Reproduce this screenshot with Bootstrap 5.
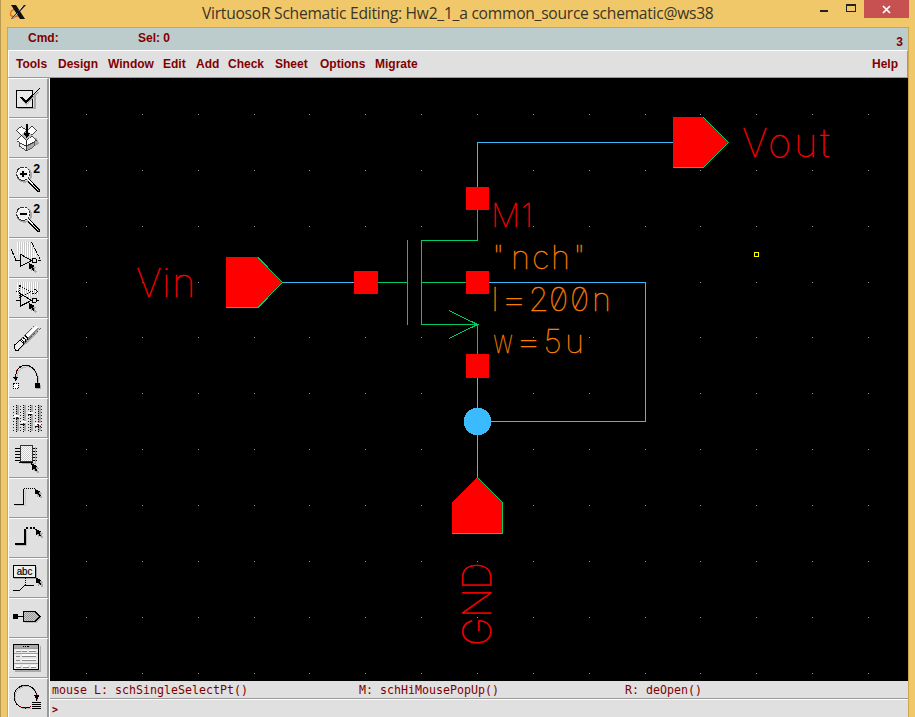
<!DOCTYPE html>
<html lang="en">
<head>
<meta charset="utf-8">
<meta name="viewport" content="width=device-width, initial-scale=1">
<title>VirtuosoR Schematic Editing</title>
<link href="https://cdn.jsdelivr.net/npm/bootstrap@5.3.0/dist/css/bootstrap.min.css" rel="stylesheet">
<style>
  html, body { height: 100%; overflow: hidden; }
  body { background: #f0c869; }
  svg { display: block; }
  .win { width: 915px; height: 717px; border-left: 1px solid #b89a52; padding: 0 6px; }
  .titlebar { height: 27px; }
  .xlogo { margin: 4px 0 0 2px; }
  .wtitle { font: 15.6px/26px "Open Sans", "Noto Sans", sans-serif; color: #3a3428; white-space: nowrap; left: 195px; top: 0; letter-spacing: -.25px; }
  .winbtns { margin-right: 0; }
  .closebtn { width: 45px; height: 18px; background: #c75050; }
  .client { border: 1px solid #caa750; border-bottom: 0; background: #e0e0e0; width: 902px; height: 690px; }
  .ui { font: bold 12px/14px "Liberation Sans", Arial, sans-serif; color: #800000; }
  .cmdbar { height: 22px; background: #bccccc; }
  .cmdgrid { display: grid; grid-template-columns: 110px 1fr auto; padding: 3px 5px 0 20px; }
  .menus { height: 28px; border-top: 1px solid #fff; border-bottom: 1px solid #999; border-right: 1px solid #999; border-left: 1px solid #fff; padding: 6px 9px 0 7px; }
  .menugrid { display: grid; grid-template-columns: 42px 50px 55px 33px 32px 47px 45px 55px 1fr auto; }
  .tools { width: 42px; border-left: 1px solid #fff; border-right: 1px solid #fff; }
  .toolbtn { width: 40px; height: 40px; border: 0 solid; border-width: 1px 2px 1px 0; border-color: #fff #999 #999 #fff; background: #e0e0e0; padding: 0; flex: none; }
  .toolbtn svg { width: 38px; height: 38px; shape-rendering: crispEdges; }
  .stat { height: 18px; border-bottom: 1px solid #999; display: grid; grid-template-columns: 307px 266px 1fr; padding: 2px 0 0 2px; }
  .term { font: 11.63px/15px "DejaVu Sans Mono", "Liberation Mono", monospace; color: #800000; white-space: pre; }
  .prompt { border-top: 1px solid #fff; padding: 2px 0 0 2px; font-weight: bold; font-size: 10px; }
  .thin { font-family: Inter, "Lato", sans-serif; font-weight: 100; stroke-width: .35px; }
  .key { font-family: "Liberation Sans", Arial, sans-serif; }
</style>
<script src="https://cdn.jsdelivr.net/npm/bootstrap@5.3.0/dist/js/bootstrap.bundle.min.js"></script>
</head>
<body>
<div class="win">
  <header class="titlebar d-flex position-relative">
    <svg class="xlogo" width="19" height="18" viewBox="0 0 19 18">
      <path d="M8 5C3 5 1 8 1.500 10.500S7 13.500 11 11" fill="none" stroke="#e8702a" stroke-width="1.500"/>
      <path d="M2 1h5l9 14h-5z" fill="#111"/><path d="M15 1h2L4 15H2z" fill="#111"/>
      <path d="M8.500 9.500L3.500 15M13.500 2L10 6.500" stroke="#ddd" stroke-width="1"/>
    </svg>
    <div class="wtitle position-absolute">VirtuosoR Schematic Editing: Hw2_1_a common_source schematic@ws38</div>
    <div class="winbtns d-flex ms-auto">
      <svg width="46" height="18" viewBox="818 0 46 18" shape-rendering="crispEdges"><path d="M820 10h8v2h-8z" fill="#222"/><path d="M846 4h10v8h-10zM847 6v5h8V6z" fill="#222" fill-rule="evenodd"/></svg>
      <div class="closebtn d-flex align-items-center justify-content-center"><svg width="9" height="9" viewBox="0 0 9 9"><path d="M1 1l7 7M8 1L1 8" stroke="#fff" stroke-width="1.700"/></svg></div>
    </div>
  </header>
  <main class="client d-flex flex-column">
    <div class="cmdbar"><div class="cmdgrid ui"><span>Cmd:</span><span>Sel: 0</span><span class="pt-1">3</span></div></div>
    <nav class="menus"><div class="menugrid ui"><span>Tools</span><span>Design</span><span>Window</span><span>Edit</span><span>Add</span><span>Check</span><span>Sheet</span><span>Options</span><span>Migrate</span><span>Help</span></div></nav>
    <div class="d-flex flex-grow-1 overflow-hidden">
      <aside class="tools d-flex flex-column flex-shrink-0">
        <svg width="0" height="0" class="position-absolute"><defs>
          <g id="cur"><path d="M4 6l4 20 5-5 6 9 5-4-6-8 6-4z" fill="#aaa"/><path d="M0 0l3 20 5-5 6 9 4-3-6-8 6-4z" fill="#000"/></g>
          <pattern id="chk" width="6" height="6" patternUnits="userSpaceOnUse"><path d="M0 0h6v6H0z" fill="#fff"/><path d="M0 0h3v3H0zM3 3h3v3H3z" fill="#ccc"/></pattern>
          <pattern id="chkd" width="6" height="6" patternUnits="userSpaceOnUse"><path d="M0 0h6v6H0z" fill="#ccc"/><path d="M0 0h3v3H0zM3 3h3v3H3z" fill="#999"/></pattern>
          <g id="lens"><path d="M90 76l28 30" stroke="#aaa" stroke-width="8"/><circle cx="73" cy="57" r="21" fill="none" stroke="#aaa" stroke-width="5"/><circle cx="70" cy="53" r="20" fill="#eee" stroke="#333" stroke-width="3" stroke-dasharray="7 2"/><circle cx="70" cy="53" r="17" fill="none" stroke="#fff" stroke-width="3"/><path d="M53 43q5-9 13-10M51 58q2 6 6 9" fill="none" stroke="#a00000" stroke-width="2.500"/><path d="M84 70l30 31" stroke="#fff" stroke-width="5"/><path d="M88 70l30 32v4h-5L84 76" fill="none" stroke="#000" stroke-width="3"/></g>
        </defs></svg>
        <button class="toolbtn"><svg viewBox="27 9 114 114"><path d="M55 96h50V54" fill="none" stroke="#aaa" stroke-width="6"/><rect x="49.500" y="42.500" width="48" height="51" fill="#e8e8e8" stroke="#000" stroke-width="3"/><path d="M66 72l14 13L116 48" fill="none" stroke="#aaa" stroke-width="4"/><path d="M60 64h7l11 9 40-36h3L78 82z" fill="#000"/></svg></button>
        <button class="toolbtn"><svg viewBox="27 9 114 114"><path d="M84 104l34-22-10-18-24 20z" fill="#aaa"/><path d="M57 78l23 13v14L57 90z" fill="#eee" stroke="#000" stroke-width="2"/><path d="M103 78L80 91v14l23-14z" fill="#aaa" stroke="#333" stroke-width="2"/><path d="M50 43l14-12 16 13-16 14zM80 44l16-13 14 12-14 15zM50 73l14-14 16 15v16L58 80zM80 74l16-15 14 14-30 17z" fill="#fff" stroke="#222" stroke-width="2.500"/><path d="M64 58l16-14 16 14-16 14z" fill="#bbb"/><path d="M78.500 24h4v26h9L80.500 66 69 50h9.500z" fill="#000"/></svg></button>
        <button class="toolbtn"><svg viewBox="27 9 114 114"><use href="#lens"/><path d="M60 54h20M70 44v20" stroke="#000" stroke-width="6"/><text class="key" x="100" y="52" font-size="37" font-weight="bold">2</text></svg></button>
        <button class="toolbtn"><svg viewBox="27 9 114 114"><use href="#lens"/><path d="M60 54h20" stroke="#000" stroke-width="6"/><text class="key" x="100" y="52" font-size="37" font-weight="bold">2</text></svg></button>
        <button class="toolbtn"><svg viewBox="27 9 114 114"><path d="M53 18v38M59 18v38M65 18v38M71 18v42M77 18v44M83 18v46M89 18v48M95 24v42M101 38v26M107 50v12" stroke="#fff" stroke-width="3"/><path d="M56 18v38M62 18v38M68 18v42M74 18v44M80 18v46M86 18v48M92 18v48M98 30v32" stroke="#bbb" stroke-width="2"/><path d="M34 40l14 34M48 74h12M95 18l25 50v6h-8" fill="none" stroke="#000" stroke-width="3" stroke-dasharray="8 2"/><path d="M60 54v38l35-18z" fill="#e0e0e0" stroke="#000" stroke-width="3"/><circle cx="103" cy="74" r="7" fill="#e0e0e0" stroke="#000" stroke-width="3"/><use href="#cur" x="86" y="81"/></svg></button>
        <button class="toolbtn"><svg viewBox="27 9 114 114"><path d="M53 18v38M59 18v38M65 18v38M71 18v42M77 18v44M83 18v46M89 18v48M95 18v42M101 18v40M107 18v40M113 18v40" stroke="#fff" stroke-width="3"/><path d="M56 18v38M62 18v38M68 18v42M74 18v44M80 18v46M86 18v48M92 18v48M98 18v40M104 18v40M110 18v40M116 18v40" stroke="#bbb" stroke-width="2"/><path d="M58 28v38l35-18zM48 46h10M110 46h8" fill="none" stroke="#000" stroke-width="3" stroke-dasharray="4 3"/><circle cx="103" cy="47" r="7" fill="none" stroke="#000" stroke-width="3" stroke-dasharray="3 3"/><path d="M48 73h14M62 54v36l33-17zM110 73h8" fill="none" stroke="#000" stroke-width="3"/><circle cx="103" cy="73" r="7" fill="#e0e0e0" stroke="#000" stroke-width="3"/><use href="#cur" x="86" y="81"/></svg></button>
        <button class="toolbtn"><svg viewBox="27 9 114 114"><path d="M54 101l60-56" stroke="#aaa" stroke-width="8"/><path d="M43 88L108 25M54 102L122 36" stroke="#444" stroke-width="2.500" stroke-dasharray="38 2 20 3 10 5 3 8"/><path d="M48 94L112 33" stroke="#fff" stroke-width="11"/><path d="M53 98L118 35" stroke="#888" stroke-width="4"/><path d="M55 102H47l-5-6v-7l18-17 12 12z" fill="#eee" stroke="#000" stroke-width="3"/><path d="M62 70q8 2 10 13M68 64q8 3 10 13M74 58q8 3 9 13" fill="none" stroke="#000" stroke-width="3"/></svg></button>
        <button class="toolbtn"><svg viewBox="27 9 114 114"><path d="M50 69C50 20 116 16 117 82" fill="none" stroke="#bbb" stroke-width="3"/><path d="M47 66C44 14 114 12 113 80" fill="none" stroke="#000" stroke-width="3"/><path d="M47 60C44 14 114 12 113 80" fill="none" stroke="#a00000" stroke-width="3" stroke-dasharray="3 12"/><path d="M39 62h15l-7 15z"/><path d="M40.500 83.500h14v14h-14z" fill="#fff" stroke="#000" stroke-width="3" stroke-dasharray="3 3"/><path d="M109 86h14v14h-14z" fill="#aaa"/><path d="M105 81h15v15h-15z"/></svg></button>
        <button class="toolbtn"><svg viewBox="27 9 114 114"><g fill="none"><path d="M52 28v78M74 28v78M96 28v78M118 28v78" stroke="#aaa" stroke-width="7"/><path d="M48 28v80M70 28v80M92 28v80M114 28v80" stroke="#000" stroke-width="3" stroke-dasharray="3 3"/><path d="M40.500 30v76M62 30v76M84 30v76M106 30v76M124 30v76" stroke="#222" stroke-width="3" stroke-dasharray="3 6"/><path d="M41 61h15M63 79h15M84 50h15M105 85h18" stroke="#fff" stroke-width="6"/><path d="M41 66h15M63 84h15M84 55h15M105 90h18" stroke="#111" stroke-width="3" stroke-dasharray="5 2"/><path d="M47 64h6M70 83h3M112 86h4" stroke="#a00000" stroke-width="4"/></g></svg></button>
        <button class="toolbtn"><svg viewBox="27 9 114 114"><path d="M46 36h66M46 45h66M46 54h66M46 63h66M46 72h66" stroke="#000" stroke-width="3"/><path d="M66 83h40V32" fill="none" stroke="#aaa" stroke-width="3"/><rect x="60" y="27" width="38" height="50" fill="url(#chk)" stroke="#333" stroke-width="3"/><path d="M58 80h42" stroke="#000" stroke-width="4"/><use href="#cur" x="94" y="82"/></svg></button>
        <button class="toolbtn"><svg viewBox="27 9 114 114"><path d="M45 88h32V42" fill="none" stroke="#bbb" stroke-width="2"/><path d="M42 85.500h29.500v-48" fill="none" stroke="#000" stroke-width="3"/><path d="M72 37.500h33" stroke="#000" stroke-width="3" stroke-dasharray="3 3"/><use href="#cur" x="104" y="38"/></svg></button>
        <button class="toolbtn"><svg viewBox="27 9 114 114"><path d="M48 88h30V42" fill="none" stroke="#bbb" stroke-width="3"/><path d="M44 84h30V38" fill="none" stroke="#000" stroke-width="6"/><path d="M78 37h27" stroke="#000" stroke-width="6" stroke-dasharray="6 5"/><use href="#cur" x="106" y="38"/></svg></button>
        <button class="toolbtn"><svg viewBox="27 9 114 114"><path d="M43 68h67V33" fill="none" stroke="#aaa" stroke-width="4"/><rect x="40.500" y="28.500" width="66" height="36" fill="#eee" stroke="#000" stroke-width="3"/><text class="key" x="50" y="56" font-size="31" textLength="47" lengthAdjust="spacingAndGlyphs" stroke="#000" stroke-width=".6">abc</text><path d="M39 103.500h20l14-15h29" fill="none" stroke="#000" stroke-width="3"/><path d="M77 67v20" stroke="#000" stroke-width="3" stroke-dasharray="3 3"/><use href="#cur" x="107" y="64"/></svg></button>
        <button class="toolbtn"><svg viewBox="27 9 114 114"><path d="M74 50h35l16 16-16 16H74z" fill="#bbb"/><path d="M39 54h15v14H39z"/><path d="M53 62h18" stroke="#000" stroke-width="4"/><path d="M71 46h34l15 15-15 16H71z" fill="url(#chkd)" stroke="#000" stroke-width="3"/></svg></button>
        <button class="toolbtn"><svg viewBox="27 9 114 114"><path d="M44 105h77V30" fill="none" stroke="#aaa" stroke-width="5"/><rect x="40.500" y="25.500" width="75" height="75" fill="#e8e8e8" stroke="#000" stroke-width="3"/><path d="M42 27h72v8H42z" fill="#aaa"/><path d="M68 31h20" stroke="#000" stroke-width="3" stroke-dasharray="4 3"/><path d="M42 36h72M42 53h72M42 82h72" stroke="#777" stroke-width="2"/><path d="M47 47h15M67 47h14M87 47h22M47 60h14M65 60h44M47 74h14M65 74h44M47 95h16M70 95h16M93 95h16" stroke="#888" stroke-width="3"/><path d="M47 43h14M67 43h13M87 43h20M65 57h42M65 71h42M47 90h14M70 90h14M93 90h14" stroke="#fff" stroke-width="4"/></svg></button>
        <button class="toolbtn"><svg viewBox="27 9 114 114"><circle cx="79" cy="65" r="34" fill="none" stroke="#bbb" stroke-width="3"/><path d="M110 60A34 34 0 1 0 90 93" fill="none" stroke="#000" stroke-width="3"/><circle cx="76" cy="62" r="34" fill="none" stroke="#a00000" stroke-width="3" stroke-dasharray="3 14"/><path d="M94 76h34v28H94z" fill="#e0e0e0"/><path d="M102 57h16l-8 18z"/><path d="M96 79.500h27M96 86h27M96 92.500h27M96 98.500h27" stroke="#000" stroke-width="3"/></svg></button>
      </aside>
      <section class="d-flex flex-column flex-grow-1">
        <svg width="858" height="603" viewBox="50 78 858 603" style="background:#000">
          <g id="dots" shape-rendering="crispEdges" fill="#9090a0"></g>
          <g shape-rendering="crispEdges" fill="none" stroke-width="1">
            <path stroke="#3db8ff" d="M477.500 187V142.500H673M282 282.500h72M489 282.500h156.500v139H491M477.500 378v30M477.500 434v44"/>
            <path stroke="#00cc66" d="M477.500 210v30.500H421M407.500 240v85M421.500 240v85M378 282.500h29M421 282.500h45M421 324.500h56.500V354M449 310.500l28.500 14-28.500 14"/>
          </g>
          <g fill="#f00" shape-rendering="crispEdges">
            <path d="M466 187h23v23h-23zM466 271h23v23h-23zM354 271h24v23h-24zM466 354h23v24h-23z"/>
            <path d="M226 257h32l25 25.500L258 308h-32zM673 117h31l25 25.500L704 168h-31zM452 534v-32l25.500-25 25.500 25v32z"/>
          </g>
          <path shape-rendering="crispEdges" fill="none" stroke="#00cc66" d="M258 257.500l24.500 25-24.500 25h-32M703.500 117.500l25 25-25 25H673M477.500 477.500l25 25v31H452"/>
          <circle cx="477.500" cy="421.500" r="13.800" fill="#3bbbff" shape-rendering="crispEdges"/>
          <rect x="754.500" y="252.500" width="4" height="4" fill="none" stroke="#ff0" shape-rendering="crispEdges"/>
          <g class="thin" fill="#f00" stroke="#f00">
            <text font-size="40" x="742 768 794 820" y="157">Vout</text>
            <text font-size="40" x="136 162 172" y="297">Vin</text>
            <text font-size="32.500" x="491 521" y="227">M1</text>
            <text font-size="39" transform="translate(491 646) rotate(-90)" x="0 28 56" y="0" stroke-width=".5">GND</text>
          </g>
          <g class="thin" fill="#ff8000" stroke="#ff8000" font-size="32.500" style="font-feature-settings:'zero'">
            <text x="492 511 532 551 573" y="269">"nch"</text>
            <text x="491.500" y="311">l</text>
            <text x="500" y="311" textLength="28" lengthAdjust="spacingAndGlyphs">=</text>
            <text x="528.500 549 570 592" y="311">200n</text>
            <text x="493" y="353" textLength="20" lengthAdjust="spacingAndGlyphs">w</text>
            <text x="514.500" y="353" textLength="28" lengthAdjust="spacingAndGlyphs">=</text>
            <text x="543.500 565" y="353">5u</text>
          </g>
        </svg>
        <div class="stat term"><span>mouse L: schSingleSelectPt()</span><span>M: schHiMousePopUp()</span><span>R: deOpen()</span></div>
        <div class="prompt term">&gt;</div>
      </section>
    </div>
  </main>
</div>
<script>
  const dots = document.getElementById('dots');
  const step = 55.87;
  for (let r = 0; r < 11; r++) for (let c = 0; c < 15; c++) {
    const p = document.createElementNS('http://www.w3.org/2000/svg', 'rect');
    p.setAttribute('x', Math.floor(86.4 + c * step));
    p.setAttribute('y', Math.floor(114.4 + r * step));
    p.setAttribute('width', 1);
    p.setAttribute('height', 1);
    dots.appendChild(p);
  }
</script>
</body>
</html>
